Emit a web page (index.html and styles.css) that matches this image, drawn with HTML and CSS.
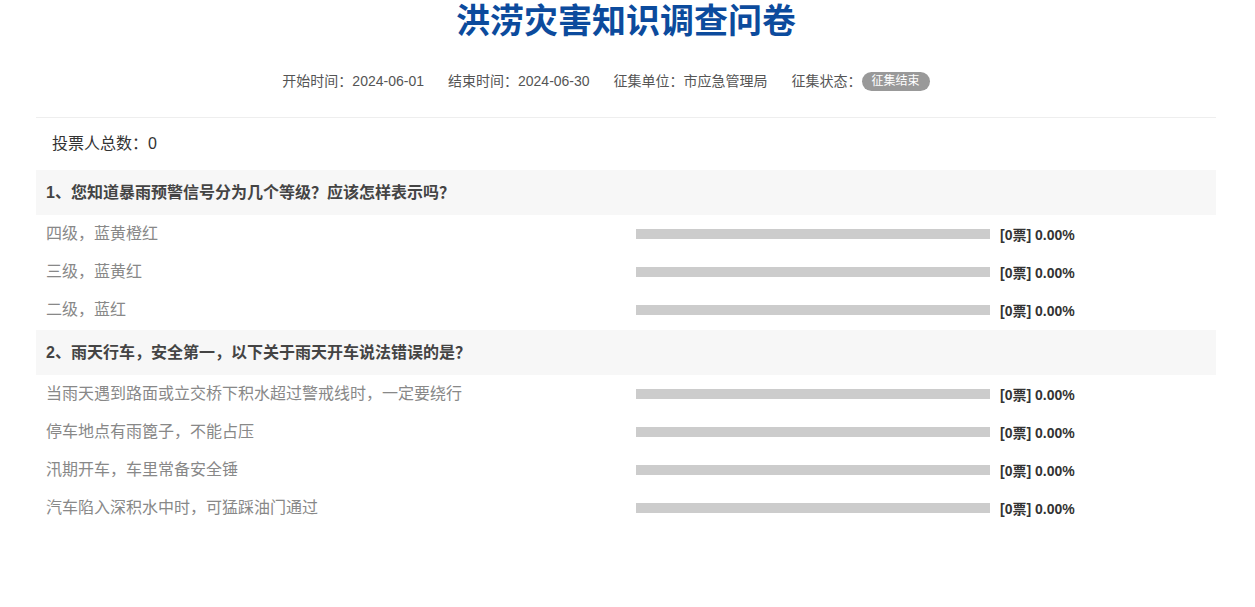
FILE: index.html
```html
<!DOCTYPE html>
<html lang="zh-CN">
<head>
    <meta charset="UTF-8" />
    <meta name="viewport" content="width=device-width, initial-scale=1.0"/>
    <title>洪涝灾害知识调查问卷</title>
    <link rel="stylesheet" href="styles.css">
</head>
<body>
    <div class="survey-container">
        <h1 class="survey-title">洪涝灾害知识调查问卷</h1>

        <div class="survey-meta">
            <span class="meta-item">开始时间：2024-06-01</span>
            <span class="meta-item">结束时间：2024-06-30</span>
            <span class="meta-item">征集单位：市应急管理局</span>
            <span class="meta-item">征集状态：<span class="status-badge">征集结束</span></span>
        </div>

        <div class="vote-total">投票人总数：0</div>

        <div class="question">
            <div class="question-title">1、您知道暴雨预警信号分为几个等级？应该怎样表示吗？</div>
            <div class="option">
                <div class="option-label">四级，蓝黄橙红</div>
                <div class="option-bar"><div class="option-fill" style="width: 0%"></div></div>
                <div class="option-result">[0票] 0.00%</div>
            </div>
            <div class="option">
                <div class="option-label">三级，蓝黄红</div>
                <div class="option-bar"><div class="option-fill" style="width: 0%"></div></div>
                <div class="option-result">[0票] 0.00%</div>
            </div>
            <div class="option">
                <div class="option-label">二级，蓝红</div>
                <div class="option-bar"><div class="option-fill" style="width: 0%"></div></div>
                <div class="option-result">[0票] 0.00%</div>
            </div>
        </div>

        <div class="question">
            <div class="question-title">2、雨天行车，安全第一，以下关于雨天开车说法错误的是？</div>
            <div class="option">
                <div class="option-label">当雨天遇到路面或立交桥下积水超过警戒线时，一定要绕行</div>
                <div class="option-bar"><div class="option-fill" style="width: 0%"></div></div>
                <div class="option-result">[0票] 0.00%</div>
            </div>
            <div class="option">
                <div class="option-label">停车地点有雨篦子，不能占压</div>
                <div class="option-bar"><div class="option-fill" style="width: 0%"></div></div>
                <div class="option-result">[0票] 0.00%</div>
            </div>
            <div class="option">
                <div class="option-label">汛期开车，车里常备安全锤</div>
                <div class="option-bar"><div class="option-fill" style="width: 0%"></div></div>
                <div class="option-result">[0票] 0.00%</div>
            </div>
            <div class="option">
                <div class="option-label">汽车陷入深积水中时，可猛踩油门通过</div>
                <div class="option-bar"><div class="option-fill" style="width: 0%"></div></div>
                <div class="option-result">[0票] 0.00%</div>
            </div>
        </div>
    </div>
</body>
</html>
```

FILE: styles.css
```css
/* Reset and base styles */
* {
    box-sizing: border-box;
    margin: 0;
    padding: 0;
}

body {
    font-family: "Liberation Sans", "Noto Sans CJK SC", sans-serif;
    background-color: #ffffff;
    color: #333333;
    padding-right: 3px;
}

.survey-container {
    width: 1180px;
    margin: 0 auto;
}

.survey-title {
    text-align: center;
    font-size: 34px;
    line-height: 42px;
    font-weight: bold;
    color: #0c4b9d;
}

.survey-meta {
    display: flex;
    justify-content: center;
    align-items: center;
    gap: 24px;
    margin-top: 29px;
    padding: 0 40px 26px 0;
    font-size: 14px;
    line-height: 20px;
    color: #555555;
    border-bottom: 1px solid #eeeeee;
}

.meta-item {
    display: flex;
    align-items: center;
}

.status-badge {
    display: inline-block;
    padding: 0 10px;
    font-size: 12px;
    line-height: 19px;
    color: #ffffff;
    background-color: #999999;
    border-radius: 10px;
}

.vote-total {
    padding: 15px 0 15px 16px;
    font-size: 16px;
    line-height: 22px;
    color: #333333;
}

.question-title {
    padding-left: 10px;
    font-size: 16px;
    font-weight: bold;
    line-height: 45px;
    color: #444444;
    background-color: #f7f7f7;
}

.option {
    display: grid;
    grid-template-columns: 600px 354px 1fr;
    align-items: center;
    height: 38px;
}

.option-label {
    padding-left: 10px;
    padding-bottom: 1px;
    font-size: 16px;
    line-height: 20px;
    color: #888888;
}

.option-bar {
    height: 10px;
    background-color: #cccccc;
}

.option-fill {
    height: 100%;
    background-color: #3c82d4;
}

.option-result {
    padding-left: 10px;
    font-size: 14px;
    font-weight: bold;
    color: #333333;
}

.question + .question {
    margin-top: 1px;
}
```
